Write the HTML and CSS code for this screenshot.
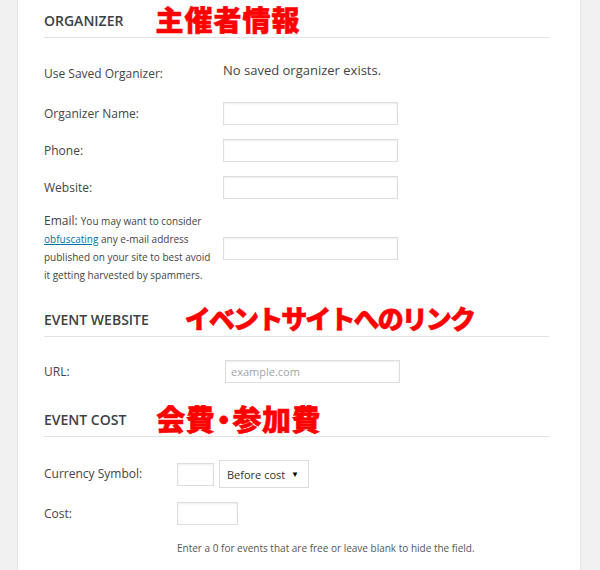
FILE: index.html
```html
<!DOCTYPE html>
<html lang="en">
<head>
<meta charset="utf-8">
<title>Event Details</title>
<link rel="stylesheet" href="styles.css">
</head>
<body>
<div class="panel">
  <section class="sec sec-org">
    <div class="sec-head">
      <h3 class="sec-title">Organizer</h3>
      <span class="note note-org">主催者情報</span>
    </div>
    <div class="rows">
      <div class="row row-saved">
        <span class="label label-saved">Use Saved Organizer:</span>
        <span class="value">No saved organizer exists.</span>
      </div>
      <div class="row">
        <label class="label">Organizer Name:</label>
        <input class="field field-wide" type="text">
      </div>
      <div class="row">
        <label class="label">Phone:</label>
        <input class="field field-wide" type="text">
      </div>
      <div class="row">
        <label class="label">Website:</label>
        <input class="field field-wide" type="text">
      </div>
      <div class="row row-email">
        <div class="label label-email">Email: <span class="hint">You may want to consider<br><a href="#" class="link">obfuscating</a> any e-mail address<br>published on your site to best avoid<br>it getting harvested by spammers.</span></div>
        <input class="field field-wide" type="text">
      </div>
    </div>
  </section>

  <section class="sec sec-web">
    <div class="sec-head">
      <h3 class="sec-title">Event Website</h3>
      <span class="note note-web">イベントサイトへのリンク</span>
    </div>
    <div class="rows">
      <div class="row">
        <label class="label">URL:</label>
        <input class="field field-wide" type="text" placeholder="example.com">
      </div>
    </div>
  </section>

  <section class="sec sec-cost">
    <div class="sec-head">
      <h3 class="sec-title">Event Cost</h3>
      <span class="note note-cost">会費<span class="dot">・</span>参加費</span>
    </div>
    <div class="rows">
      <div class="row row-currency">
        <label class="label">Currency Symbol:</label>
        <div class="currency">
          <input class="field field-sym" type="text">
          <div class="select">
            <span class="select-text">Before cost</span>
            <span class="select-arrow">▼</span>
          </div>
        </div>
      </div>
      <div class="row">
        <label class="label">Cost:</label>
        <input class="field field-cost" type="text">
      </div>
      <div class="row row-help">
        <span></span>
        <p class="help">Enter a 0 for events that are free or leave blank to hide the field.</p>
      </div>
    </div>
  </section>
</div>
</body>
</html>
```

FILE: styles.css
```css
* { box-sizing: border-box; }

html, body {
  margin: 0;
  padding: 0;
  background: #f1f1f1;
  font-family: "Open Sans", "Noto Sans", sans-serif;
  color: #444;
}

.panel {
  margin-left: 17px;
  width: 564px;
  min-height: 570px;
  background: #fff;
  border-left: 1px solid #e5e5e5;
  border-right: 1px solid #e5e5e5;
  padding: 0 31px 0 26px;
}

.sec { margin-bottom: 9px; }

.sec-head {
  display: flex;
  align-items: center;
  height: 38px;
  padding: 11px 0 6px;
  border-bottom: 1px solid #e1e1e1;
}

.sec-title {
  margin: 0;
  font-size: 14px;
  font-weight: 600;
  line-height: 20px;
  height: 20px;
  text-transform: uppercase;
  color: #3c4146;
}

.note {
  height: 20px;
  line-height: 20px;
  margin-top: -4px;
  font-family: "Noto Sans CJK JP", "Noto Sans CJK SC", sans-serif;
  font-weight: 900;
  font-size: 28px;
  color: #ff0000;
  -webkit-text-stroke: 0.6px #ff0000;
  white-space: nowrap;
}

.note-org { margin-left: 32px; letter-spacing: 1px; }
.note-web { margin-left: 36px; font-size: 26px; letter-spacing: -1.9px; }
.note-cost { margin-left: 30px; font-size: 29px; letter-spacing: 0.5px; }
.dot { font-feature-settings: "palt" 1; letter-spacing: 1.5px; padding-left: 1px; }

.rows { padding-top: 16px; }

.row {
  display: grid;
  align-items: center;
  padding: 7px 0;
}

.sec-org .row { grid-template-columns: 179px 175px; }
.sec-web .row { grid-template-columns: 181px 175px; }
.sec-cost .row { grid-template-columns: 133px auto; }

.label {
  font-size: 12px;
  line-height: 18px;
  color: #444;
}

.row-saved {
  align-items: start;
  padding: 0;
  height: 41px;
}

.label-saved { padding-top: 11px; }

.value {
  padding-top: 6px;
  font-size: 13px;
  line-height: 20px;
  color: #444;
  white-space: nowrap;
}

.row-email { padding: 6px 0; }

.hint { font-size: 10px; }

.link { color: #0073aa; text-decoration: underline; }

.field {
  display: block;
  height: 23px;
  margin: 0;
  padding: 0 5px;
  border: 1px solid #ddd;
  background: #fff;
  box-shadow: inset 0 1px 2px rgba(0, 0, 0, 0.07);
  font-family: "Open Sans", sans-serif;
  font-size: 11px;
  color: #333;
  outline: none;
}

.field::placeholder { color: #a0a5aa; }

.field-wide { width: 175px; }
.field-sym { width: 37px; }
.field-cost { width: 61px; }

.row-currency { height: 42px; padding: 0; }

.currency {
  display: flex;
  align-items: center;
  gap: 5px;
}

.select {
  display: flex;
  align-items: center;
  justify-content: space-between;
  width: 90px;
  height: 28px;
  padding: 0 9px 0 7px;
  border: 1px solid #ddd;
  background: #fff;
}

.select-text {
  font-size: 11px;
  color: #333;
}

.select-arrow {
  font-size: 8px;
  color: #000;
  line-height: 1;
}

.row-help { padding: 8px 0 0; }

.help {
  margin: 0;
  font-size: 10px;
  line-height: 16px;
  color: #555;
  white-space: nowrap;
}
```
